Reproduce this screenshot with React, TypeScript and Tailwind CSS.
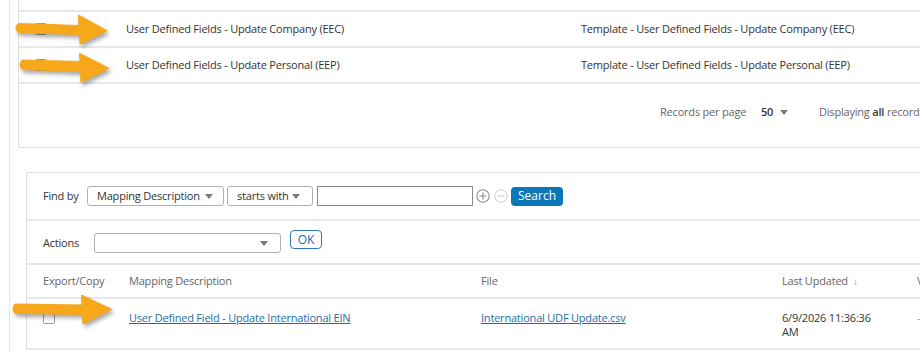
import React from "react";

const Caret = ({ className = "" }: { className?: string }) => (
  <svg width="8" height="5" viewBox="0 0 8 5" className={className}>
    <path d="M0 0 L8 0 L4 5 Z" fill="#7a7a7a" />
  </svg>
);

const Arrow = ({ d }: { d: string }) => (
  <path d={d} fill="#f6a81a" stroke="#f6a81a" strokeWidth="1" strokeLinejoin="round" />
);

export default function App() {
  return (
    <div className="relative w-[920px] h-[353px] overflow-hidden bg-white font-['Open_Sans','Noto_Sans',sans-serif] text-[11px] tracking-[-0.2px] text-[#333]">
      <div className="flex h-full">
        <div className="w-[9px] shrink-0" />
        <div className="w-px shrink-0 bg-[#e6e6e6]" />
        <div className="flex-1 pl-[8px] min-w-0">
          {/* Panel 1 */}
          <div className="w-[1000px] border-l border-b border-[#dedede] rounded-bl-[3px]">
            <div className="h-[12px] border-b-2 border-[#e8e8e8]" />
            {[
              ["User Defined Fields - Update Company (EEC)", "Template - User Defined Fields - Update Company (EEC)"],
              ["User Defined Fields - Update Personal (EEP)", "Template - User Defined Fields - Update Personal (EEP)"],
            ].map(([a, b]) => (
              <div key={a} className="flex items-center h-[36px] border-b-2 border-[#e8e8e8]">
                <div className="w-[107px] pl-[16px] shrink-0">
                  <div className="w-[12px] h-[12px] border border-[#9a9a9a] rounded-[2px]" />
                </div>
                <div className="w-[455px] shrink-0">{a}</div>
                <div>{b}</div>
              </div>
            ))}
            <div className="h-[63px] flex items-center pl-[641px] pb-[6px]">
              <span className="w-[101px] text-[#666]">Records per page</span>
              <span className="w-[58px] flex items-center gap-[7px]">
                <span className="font-semibold text-[#333]">50</span>
                <Caret />
              </span>
              <span className="text-[#666] whitespace-nowrap">
                Displaying <span className="font-semibold text-[#333]">all</span> records
              </span>
            </div>
          </div>

          {/* Panel 2 */}
          <div className="ml-[8px] mt-[24px] w-[1000px] border-l border-t border-[#dedede] rounded-tl-[3px]">
            <div className="h-[48px] flex items-center pl-[16px] border-b-2 border-[#e8e8e8]">
              <span className="w-[44px]">Find by</span>
              <div className="w-[137px] h-[20px] border border-[#b0b0b0] rounded-[3px] flex items-center justify-between pl-[9px] pr-[10px]">
                <span>Mapping Description</span>
                <Caret />
              </div>
              <div className="ml-[3px] w-[86px] h-[20px] border border-[#b0b0b0] rounded-[3px] flex items-center justify-between pl-[9px] pr-[12px]">
                <span>starts with</span>
                <Caret />
              </div>
              <div className="ml-[4px] w-[156px] h-[20px] border border-[#8a8a8a]" />
              <svg width="14" height="14" viewBox="0 0 14 14" className="ml-[3px]">
                <circle cx="7" cy="7" r="6.2" fill="none" stroke="#8c8c8c" strokeWidth="1.1" />
                <path d="M7 3.5 V10.5 M3.5 7 H10.5" stroke="#8c8c8c" strokeWidth="1.2" />
              </svg>
              <svg width="14" height="14" viewBox="0 0 14 14" className="ml-[4px]">
                <circle cx="7" cy="7" r="6.2" fill="none" stroke="#d4d4d4" strokeWidth="1.1" />
                <path d="M3.5 7 H10.5" stroke="#d4d4d4" strokeWidth="1.2" />
              </svg>
              <button className="ml-[3px] h-[19px] w-[52px] rounded-[4px] bg-[#0b77b7] text-white text-[12px] tracking-normal leading-none flex items-center justify-center">
                Search
              </button>
            </div>
            <div className="h-[44px] flex items-start pl-[16px] border-b-2 border-[#e8e8e8]">
              <span className="w-[51px] mt-[14px]">Actions</span>
              <div className="mt-[12px] w-[187px] h-[20px] border border-[#b0b0b0] rounded-[3px] flex items-center justify-end pr-[12px]">
                <Caret />
              </div>
              <button className="ml-[9px] mt-[9px] w-[32px] h-[19px] border border-[#2b7bb9] rounded-[4px] text-[#1d6ea8] text-[12px] tracking-normal leading-none flex items-center justify-center">
                OK
              </button>
            </div>
            <div className="h-[34px] flex items-center pl-[16px] border-b-2 border-[#e8e8e8] text-[#666] whitespace-nowrap">
              <span className="w-[86px] shrink-0">Export/Copy</span>
              <span className="w-[352px] shrink-0">Mapping Description</span>
              <span className="w-[301px] shrink-0">File</span>
              <span className="w-[135px] shrink-0 flex items-center gap-[5px]">
                Last Updated <span className="text-[10px] text-[#999]">↓</span>
              </span>
              <span>Version</span>
            </div>
            <div className="h-[51px] flex items-start pl-[16px] pt-[12px] border-b-2 border-[#e8e8e8] leading-[14px] whitespace-nowrap">
              <span className="w-[86px] shrink-0 pt-[1px]">
                <span className="block w-[12px] h-[12px] border border-[#9a9a9a] rounded-[2px]" />
              </span>
              <a className="w-[352px] shrink-0 text-[#1d6ea8] underline">User Defined Field - Update International EIN</a>
              <a className="w-[301px] shrink-0 text-[#1d6ea8] underline">International UDF Update.csv</a>
              <span className="w-[135px] shrink-0">
                6/9/2026 11:36:36
                <br />
                AM
              </span>
              <span className="text-[#999]">-</span>
            </div>
          </div>
        </div>
      </div>

      <svg width="920" height="353" className="absolute left-0 top-0 pointer-events-none drop-shadow-[2px_3px_2px_rgba(0,0,0,0.35)]">
        <Arrow d="M18 23.5 L79 25.5 L78.5 15 L107 30.8 L80 44 L79.5 34.5 L18 32.5 Q14 28 18 23.5 Z" />
        <Arrow d="M22 60 L80 61.5 L79.5 53.3 L109 68.3 L81 82.5 L80.5 71.5 L22 69.5 Q18 64.8 22 60 Z" />
        <Arrow d="M15 304 L82 305 L81.5 295 L111.5 309.3 L83 324 L82.5 314.5 L15 313.3 Q11 308.6 15 304 Z" />
      </svg>
    </div>
  );
}
